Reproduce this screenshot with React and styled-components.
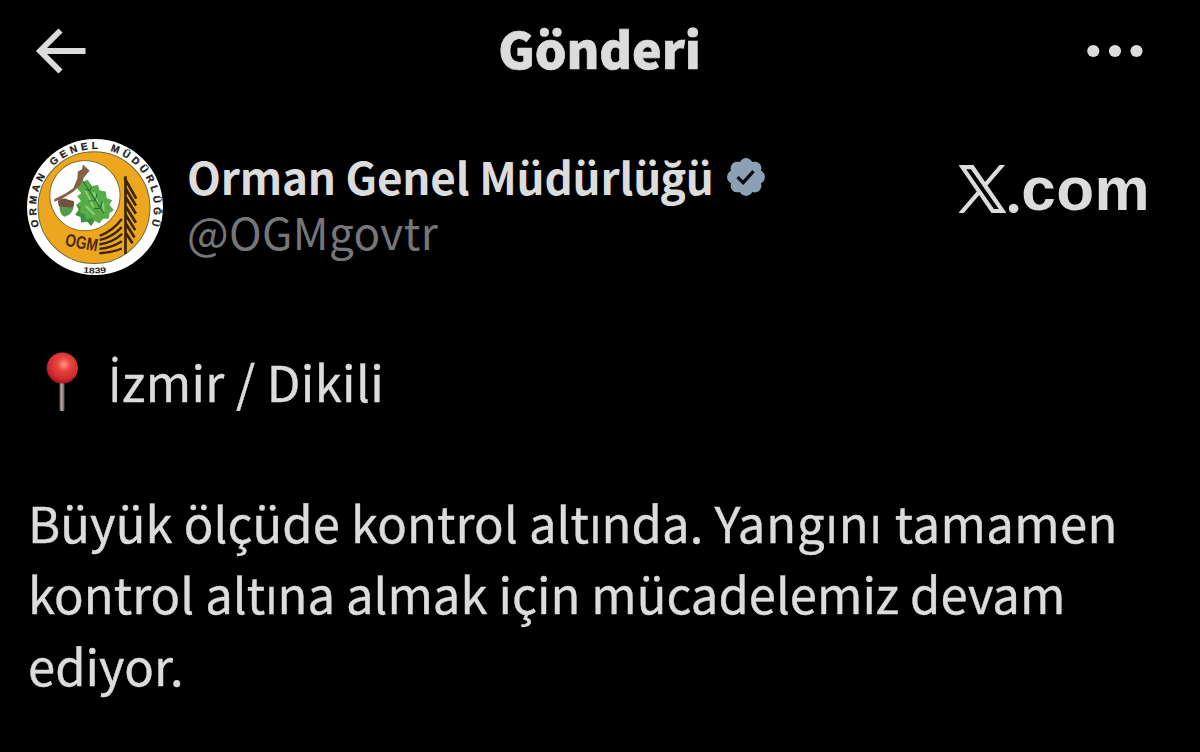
import React from 'react'
import styled, { createGlobalStyle } from 'styled-components'

const GlobalStyle = createGlobalStyle`
    * {
        box-sizing: border-box;
    }

    body {
        margin: 0;
        background-color: #000;
    }
`

const Container = styled.div`
    width: 1200px;
    height: 752px;
    overflow: hidden;
    background-color: #000;
    color: #dcdcdc;
    font-family: "Noto Sans CJK SC", "Open Sans", sans-serif;
`

const Header = styled.header`
    height: 102px;
    padding: 0 57px 0 35px;
    display: flex;
    justify-content: space-between;
    align-items: center;
`

const Title = styled.h1`
    margin: 0 0 9px 25px;
    font-size: 50px;
    font-weight: 900;
    line-height: 72px;
    letter-spacing: -0.1px;
    -webkit-text-stroke: 0.7px #dcdcdc;
`

const Icon = styled.svg`
    display: block;
    flex: none;
`

const Author = styled.section`
    height: 136px;
    margin-top: 37px;
    padding: 0 50px 0 27px;
    display: flex;
`

const Names = styled.div`
    margin-left: 24px;
    padding-top: 10px;
    flex: 1;
`

const NameRow = styled.div`
    height: 55px;
    display: flex;
    align-items: center;
    gap: 13px;
`

const Name = styled.span`
    font-size: 44px;
    font-weight: 700;
    line-height: 55px;
    letter-spacing: -0.18px;
    white-space: nowrap;
`

const Handle = styled.div`
    font-size: 44px;
    line-height: 55px;
    letter-spacing: 0.4px;
    color: #74767a;
`

const Brand = styled.div`
    height: 48px;
    margin-top: 26px;
    display: flex;
    align-items: flex-end;
    font-family: "Liberation Sans", sans-serif;
    font-size: 62px;
    font-weight: 700;
    line-height: 48px;
    letter-spacing: 0.4px;
`

const Dot = styled.span`
    font-family: Lato, sans-serif;
`

const Post = styled.article`
    padding: 70px 28px 0;
    font-size: 49px;
    line-height: 71.5px;
    -webkit-text-stroke: 0.4px #dcdcdc;
`

const Place = styled.p`
    margin: 0;
    display: flex;
    align-items: center;
    gap: 28px;
    padding-left: 16px;
    letter-spacing: 0.35px;
`

const Accent = styled.span`
    font-family: "Open Sans", sans-serif;
`

const Text = styled.p`
    margin: 66px 0 0;
    white-space: nowrap;
`

const Line = styled.span`
    display: block;
`

const Phrase = styled.span`
    letter-spacing: ${p => p.$spacing}px;
`

function Logo() {
  return (
    <Icon width="136" height="136" viewBox="24 26 406 406">
      <defs>
        <path id="ring" d="M 60 287 A 176 176 0 1 1 388 303" />
        <path id="year" d="M 160 418 Q 226 436 292 418" />
      </defs>
      <circle cx="227" cy="229" r="203" fill="#fff" />
      <circle cx="224" cy="231" r="167" fill="#eda71f" stroke="#6d6a38" strokeWidth="3" />
      <circle cx="197" cy="195" r="105" fill="#fff" stroke="#8a6a30" strokeWidth="3" />
      <path fill="#56ad48" d="M180 157 L205 148 L218 166 L236 163 L241 180 L259 183 L262 202 L278 209 L270 222 L283 239 L270 248 L268 264 L251 264 L240 278 L226 270 L215 286 L204 272 L186 275 L184 259 L168 252 L179 237 L171 222 L185 211 L174 196 L186 188 L174 174 Z" />
      <path fill="#3f8f3c" d="M171 222 L185 228 L180 244 L198 252 L200 266 L218 262 L226 270 L215 286 L204 272 L186 275 L184 259 L168 252 L179 237 Z" />
      <path fill="none" stroke="#8bd06b" strokeWidth="6" d="M198 178 L223 230 M223 184 L236 220 M200 226 L225 252 M251 215 L253 242" />
      <path fill="none" stroke="#286b32" strokeWidth="3" d="M187 146 L254 248 M196 176 L211 181 L216 168 M207 211 L228 210 L233 189 M224 235 L243 232 L249 212" />
      <path fill="#856246" d="M191 102 L211 121 L194 140 L184 163 L163 183 L124 207 L104 213 L106 205 L139 189 L162 173 L174 145 L176 123 L188 116 Z" />
      <path fill="#55994a" d="M121 222 Q119 250 136 258 Q160 253 164 225 Z" />
      <path fill="#73513b" d="M116 211 Q132 198 147 207 L163 211 Q169 222 158 231 L119 227 Z" />
      <g fill="none" stroke="#3b260c" strokeWidth="8">
        <path d="M318 137 V369 M315 142 L350 204 M318 173 L349 225 M318 199 L349 249 M318 226 L349 276 M318 251 L347 298 M318 277 L345 320 M318 305 L339 337" />
        <path strokeWidth="7" d="M241 315 Q281 300 307 265 M241 328 Q280 318 307 289 M240 341 Q281 334 308 309 M240 354 Q280 350 307 331 M240 367 Q280 365 307 353" />
      </g>
      <text x="136" y="345" transform="rotate(10 136 345)" fill="#4a2c0c" fontFamily="Liberation Sans" fontWeight="700" fontSize="54" textLength="98" lengthAdjust="spacingAndGlyphs">OGM</text>
      <text fill="#222" stroke="#222" strokeWidth="0.8" fontFamily="Liberation Sans" fontWeight="700" fontSize="30" wordSpacing="8">
        <textPath href="#ring" textLength="662">ORMAN GENEL MÜDÜRLÜĞÜ</textPath>
      </text>
      <text fill="#222" fontFamily="Liberation Sans" fontWeight="700" fontSize="24">
        <textPath href="#year" startOffset="32" textLength="70" lengthAdjust="spacingAndGlyphs">1839</textPath>
      </text>
    </Icon>
  )
}

function Verified() {
  return (
    <Icon width="38" height="38" viewBox="1.6 1.6 18.8 18.8">
      <path fill="#8ba0b4" d="M20.396 11c-.018-.646-.215-1.275-.57-1.816-.354-.54-.852-.972-1.438-1.246.223-.607.27-1.264.14-1.897-.131-.634-.437-1.218-.882-1.687-.47-.445-1.053-.75-1.687-.882-.633-.13-1.29-.083-1.897.14-.273-.587-.704-1.086-1.245-1.44S11.647 1.62 11 1.604c-.646.017-1.273.213-1.813.568s-.969.854-1.24 1.44c-.608-.223-1.267-.272-1.902-.14-.635.13-1.22.436-1.69.882-.445.47-.749 1.055-.878 1.688-.13.633-.08 1.29.144 1.896-.587.274-1.087.705-1.443 1.245-.356.54-.555 1.17-.574 1.817.02.647.218 1.276.574 1.817.356.54.856.972 1.443 1.245-.224.606-.274 1.263-.144 1.896.13.634.433 1.218.877 1.688.47.443 1.054.747 1.687.878.633.132 1.29.084 1.897-.136.274.586.705 1.084 1.246 1.439.54.354 1.17.551 1.816.569.647-.016 1.276-.213 1.817-.567s.972-.854 1.245-1.44c.604.239 1.266.296 1.903.164.636-.132 1.22-.447 1.68-.907.46-.46.776-1.044.908-1.681s.075-1.299-.165-1.903c.586-.274 1.084-.705 1.439-1.246.354-.54.551-1.17.569-1.816z" />
      <path fill="none" stroke="#05080c" strokeWidth="1.6" d="M6.8 11.1 L9.6 13.8 L14.7 8.1" />
    </Icon>
  )
}

function Pin() {
  return (
    <Icon width="36" height="60" viewBox="0 0 36 60">
      <defs>
        <radialGradient id="ball" cx="0.55" cy="0.38" r="0.6">
          <stop offset="0" stopColor="#ff9a84" />
          <stop offset="0.35" stopColor="#e8453f" />
          <stop offset="0.8" stopColor="#cf2a2e" />
          <stop offset="1" stopColor="#a8181c" />
        </radialGradient>
        <linearGradient id="needle">
          <stop offset="0" stopColor="#6b5a58" />
          <stop offset="0.45" stopColor="#b9aaa8" />
          <stop offset="1" stopColor="#5c4b4a" />
        </linearGradient>
      </defs>
      <rect x="15.5" y="28" width="5" height="31" rx="1.5" fill="url(#needle)" />
      <circle cx="18.3" cy="16" r="15.6" fill="url(#ball)" />
    </Icon>
  )
}

export default function App() {
  return (
    <Container>
      <GlobalStyle />
      <Header>
        <Icon width="52" height="46" viewBox="0 0 52 46" fill="none" stroke="#dcdcdc" strokeWidth="5.8">
          <path d="M25.5 2.5 L5 23 L25.5 43.5 M5 23 H50.5" />
        </Icon>
        <Title>Gönderi</Title>
        <Icon width="56" height="14" viewBox="0 0 56 14" fill="#dcdcdc">
          <circle cx="6.3" cy="7" r="6.1" />
          <circle cx="28" cy="7" r="6.1" />
          <circle cx="49.5" cy="7" r="6.1" />
        </Icon>
      </Header>
      <Author>
        <Logo />
        <Names>
          <NameRow>
            <Name>Orman Genel Müdürlüğü</Name>
            <Verified />
          </NameRow>
          <Handle>@OGMgovtr</Handle>
        </Names>
        <Brand>
          <Icon width="47" height="48" viewBox="-0.3 -0.3 24.6 24.6" preserveAspectRatio="none" fill="#dcdcdc" stroke="#dcdcdc" strokeWidth="0.6">
            <path d="M14.258 10.152L23.176 0h-2.113l-7.747 8.813L7.133 0H0l9.352 13.328L0 23.973h2.113l8.176-9.309 6.531 9.309h7.133l-9.695-13.821zm-2.895 3.293l-.949-1.328L2.875 1.56h3.246l6.086 8.523.945 1.328 7.91 11.078h-3.246l-6.454-9.044z" />
          </Icon>
          <Dot>.</Dot>com
        </Brand>
      </Author>
      <Post>
        <Place>
          <Pin />
          <span><Accent>İ</Accent>zmir / Dikili</span>
        </Place>
        <Text>
          <Line>
            <Phrase $spacing={0.08}>Büyük ölçüde kontrol altında. </Phrase>
            <Phrase $spacing={0.9}>Yangını </Phrase>
            <Phrase $spacing={0.4}>tamamen</Phrase>
          </Line>
          <Line>kontrol altına almak için mücadelemiz devam</Line>
          <Line>ediyor.</Line>
        </Text>
      </Post>
    </Container>
  )
}
